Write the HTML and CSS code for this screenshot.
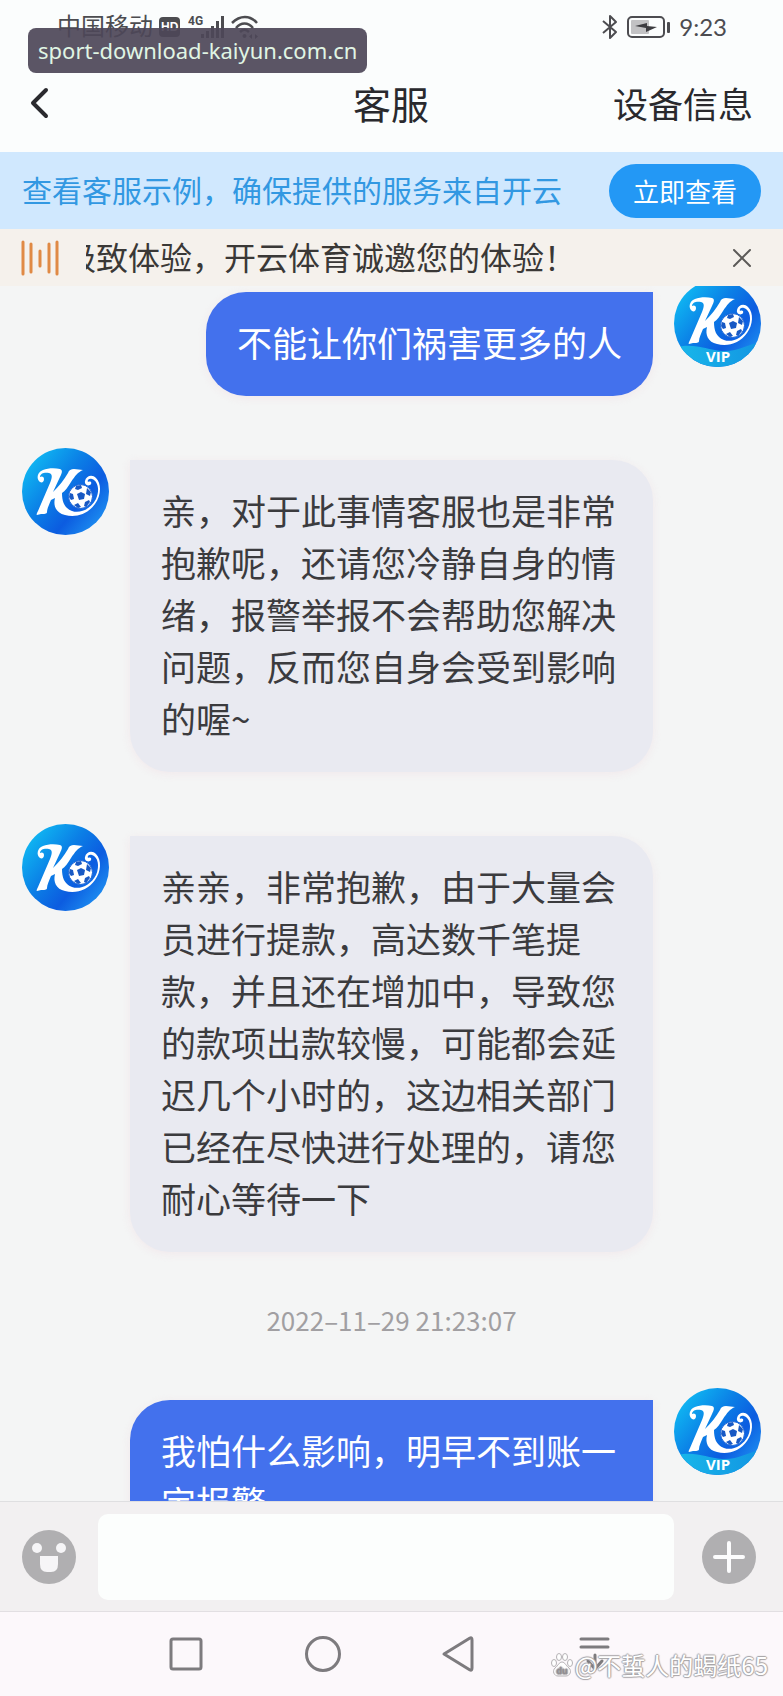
FILE: index.html
```html
<!DOCTYPE html>
<html lang="zh-CN">
<head>
<meta charset="utf-8">
<meta name="viewport" content="width=device-width, initial-scale=1">
<title>客服</title>
<link rel="stylesheet" href="styles.css">
</head>
<body>
<svg class="defs" aria-hidden="true">
  <defs>
    <linearGradient id="disc" x1="0" y1="0.15" x2="0.85" y2="0.85">
      <stop offset="0" stop-color="#10c0f4"/>
      <stop offset="0.45" stop-color="#0b7fe6"/>
      <stop offset="0.75" stop-color="#0c5ce0"/>
      <stop offset="1" stop-color="#1a86ee"/>
    </linearGradient>
    <linearGradient id="wave" x1="0" y1="0" x2="1" y2="0">
      <stop offset="0" stop-color="#19b8ea"/>
      <stop offset="1" stop-color="#1295e2"/>
    </linearGradient>
    <clipPath id="round"><circle cx="43.5" cy="43.5" r="43.5"/></clipPath>
    <symbol id="mark" viewBox="0 0 87 87">
      <path fill="#fff" d="M18 34C14 31 15 24 21 22C26 20 33 20 38 21C41 22 40 25 38 29L31 44C37 38 42 32 46 25C47 22 49 21 52 21L61 22C56 24 53 28 49 34C46 39 43 43 40 45C40 53 42 60 50 63C58 66 69 61 74 51C78 42 76 33 70 31C67 30 65 32 66 34C68 33 70 34 69 36C67 39 62 37 63 33C64 28 70 26 74 30C80 36 79 48 73 56C66 66 54 70 43 67C34 65 31 58 33 50L29 52C27 57 25 61 25 64C25 66 22 66 19 66L15 67C14 67 15 65 16 63L28 35C30 30 31 26 27 25C23 24 18 25 18 29C19 28 22 28 22 31C22 34 20 35 18 34Z"/>
      <circle cx="58.5" cy="48.500" r="12" fill="#fff" stroke="#1461d6" stroke-width="1"/>
      <g fill="#1859c4">
        <path d="M55 46l4-2 4 2-1 5-5 1z"/>
        <path d="M54 38l5-1 1 3-4 2-3-1z"/>
        <path d="M65 40l4 4-1 4-4-2z"/>
        <path d="M48 45l3 1 1 5-3 1-2-3z"/>
        <path d="M52 57l4-2 3 4-3 1z"/>
        <path d="M63 54l4-2 1 2-4 5-2-1z"/>
      </g>
    </symbol>
    <symbol id="logo" viewBox="0 0 87 87">
      <circle cx="43.5" cy="43.5" r="43.5" fill="url(#disc)"/>
      <use href="#mark" width="87" height="87"/>
    </symbol>
    <symbol id="logo-vip" viewBox="0 0 87 87">
      <g clip-path="url(#round)">
        <rect width="87" height="87" fill="url(#disc)"/>
        <path d="M0 68C20 62 32 70 48 71C64 72 74 64 87 62V87H0Z" fill="url(#wave)"/>
      </g>
      <use href="#mark" y="-3" width="87" height="87"/>
      <text x="44" y="82" text-anchor="middle" class="vip">VIP</text>
    </symbol>
  </defs>
</svg>

<div class="screen">
  <div class="status">
    <span class="carrier">中国移动</span>
    <span class="hd">HD</span>
    <svg class="signal" width="38" height="26" viewBox="0 0 38 26" fill="#4c4c50" aria-hidden="true">
      <text x="0" y="11" class="net">4G</text>
      <rect x="13" y="20" width="3" height="4"/><rect x="18" y="17" width="3" height="7"/>
      <rect x="23" y="12" width="3" height="12"/><rect x="28" y="7" width="3" height="17"/><rect x="33" y="2" width="3" height="22"/>
    </svg>
    <svg class="wifi" width="28" height="26" viewBox="0 0 28 26" fill="none" stroke="#4c4c50" stroke-width="2.500" aria-hidden="true">
      <path d="M1 9C9 1 19 1 26 9M5 14C10 8 17 8 22 14M9 18C12 15 15 15 18 18"/>
      <circle cx="13.500" cy="22" r="2" fill="#4c4c50" stroke="none"/>
      <path d="M21 20l-3 2.500 3 2.500zM24 20l3 2.500-3 2.500z" fill="#4c4c50" stroke="none"/>
    </svg>
    <svg class="bluetooth" width="18" height="26" viewBox="0 0 18 26" fill="none" stroke="#4c4c50" stroke-width="2" stroke-linejoin="round" aria-hidden="true">
      <path d="M2 7L15 18L9 24V2L15 8L2 19"/>
    </svg>
    <svg width="44" height="26" viewBox="0 0 44 26" aria-hidden="true">
      <rect x="1" y="3" width="36" height="20" rx="4" fill="none" stroke="#4c4c50" stroke-width="2"/>
      <rect x="4" y="6" width="18" height="14" rx="1" fill="#c2c2c4"/>
      <path d="M8 12L20 9V12L30 13L19 18V14Z" fill="#3c3c40"/>
      <rect x="40" y="8" width="3" height="11" rx="1" fill="#4c4c50"/>
    </svg>
    <span class="clock">9:23</span>
    <span class="site">sport-download-kaiyun.com.cn</span>
  </div>

  <header class="header">
    <button class="plain back" type="button" aria-label="返回">
      <svg width="20" height="32" viewBox="0 0 20 32" fill="none" stroke="#2a2a2e" stroke-width="4" stroke-linecap="round" stroke-linejoin="round"><path d="M17 3L4 16L17 29"/></svg>
    </button>
    <h1 class="title">客服</h1>
    <button class="plain device" type="button">设备信息</button>
  </header>

  <section class="banner">
    <p class="banner-text">查看客服示例，确保提供的服务来自开云</p>
    <button class="pill" type="button">立即查看</button>
  </section>

  <section class="notice">
    <svg width="38" height="36" viewBox="0 0 38 36" stroke="#e08a45" stroke-width="3" stroke-linecap="round" aria-hidden="true">
      <path d="M2 2V34M10 4V32M19 11V26M28 4V32M36 2V34"/>
    </svg>
    <div class="ticker"><p class="ticker-text">极致体验，开云体育诚邀您的体验！</p></div>
    <button class="plain close" type="button" aria-label="关闭">
      <svg width="20" height="20" viewBox="0 0 20 20" stroke="#5c5a58" stroke-width="2" stroke-linecap="round"><path d="M2 2L18 18M18 2L2 18"/></svg>
    </button>
  </section>

  <main class="chat">
    <div class="thread">
      <article class="message mine">
        <p class="bubble">不能让你们祸害更多的人</p>
        <svg class="avatar" role="img" aria-label="VIP"><use href="#logo-vip"/></svg>
      </article>
      <article class="message">
        <svg class="avatar" role="img" aria-label="客服"><use href="#logo"/></svg>
        <p class="bubble">亲，对于此事情客服也是非常抱歉呢，还请您冷静自身的情绪，报警举报不会帮助您解决问题，反而您自身会受到影响的喔~</p>
      </article>
      <article class="message">
        <svg class="avatar" role="img" aria-label="客服"><use href="#logo"/></svg>
        <p class="bubble">亲亲，非常抱歉，由于大量会员进行提款，高达数千笔提款，并且还在增加中，导致您的款项出款较慢，可能都会延迟几个小时的，这边相关部门已经在尽快进行处理的，请您耐心等待一下</p>
      </article>
      <time class="time" datetime="2022-11-29T21:23:07">2022–11–29 21:23:07</time>
      <article class="message mine">
        <p class="bubble">我怕什么影响，明早不到账一定报警</p>
        <svg class="avatar" role="img" aria-label="VIP"><use href="#logo-vip"/></svg>
      </article>
    </div>
  </main>

  <form class="composer">
    <button class="plain" type="button" aria-label="表情">
      <svg width="54" height="54" viewBox="0 0 54 54"><circle cx="27" cy="27" r="27" fill="#b0afb1"/><g fill="#f6f5f7"><circle cx="15" cy="18" r="5"/><circle cx="39" cy="18" r="5"/><path d="M18 26H36V34Q36 42 29 42H25Q18 42 18 34Z"/></g></svg>
    </button>
    <input class="field" type="text" aria-label="消息">
    <button class="plain" type="button" aria-label="更多">
      <svg width="54" height="54" viewBox="0 0 54 54"><circle cx="27" cy="27" r="27" fill="#b0afb1"/><path d="M27 13V41M13 27H41" stroke="#fcfcfd" stroke-width="4" stroke-linecap="round"/></svg>
    </button>
  </form>

  <nav class="system">
    <button class="plain" type="button" aria-label="最近任务"><svg class="key" viewBox="0 0 40 40"><rect x="5" y="5" width="30" height="30" rx="2"/></svg></button>
    <button class="plain" type="button" aria-label="主页"><svg class="key" viewBox="0 0 40 40"><circle cx="20" cy="20" r="16.500"/></svg></button>
    <button class="plain" type="button" aria-label="后退"><svg class="key" viewBox="0 0 40 40"><path d="M4 20L30 4Q32 3 32 6V34Q32 37 30 36Z"/></svg></button>
    <button class="plain" type="button" aria-label="收起"><svg class="key" viewBox="0 0 40 40"><path d="M4 5H31M4 13H31M18 21V35M11 27L18 35L25 27"/></svg></button>
    <span class="credit">
      <svg width="22" height="24" viewBox="0 0 22 24" fill="#fff" stroke="#b4b1b4" stroke-width="1" aria-hidden="true">
        <ellipse cx="3" cy="10" rx="2.500" ry="3.500"/><ellipse cx="8" cy="4" rx="2.500" ry="3.500"/><ellipse cx="14" cy="4" rx="2.500" ry="3.500"/><ellipse cx="19" cy="10" rx="2.500" ry="3.500"/>
        <path d="M11 9C14 9 15 13 18 15C21 18 19 23 15 23H7C3 23 1 18 4 15C7 13 8 9 11 9Z"/>
        <text x="11" y="21" text-anchor="middle" class="du">du</text>
      </svg>
      <span>@不蜇人的蝎纸65</span>
    </span>
  </nav>
</div>
</body>
</html>
```

FILE: styles.css
```css
* {
  box-sizing: border-box;
}

body {
  margin: 0;
  background: #fbfdfd;
  color: #29292d;
  font-family: "Noto Sans CJK SC", "Noto Sans", sans-serif;
}

h1,
p {
  margin: 0;
  font-weight: 400;
}

.defs {
  position: absolute;
  width: 0;
  height: 0;
}

.plain {
  display: flex;
  padding: 0;
  border: 0;
  background: none;
  color: inherit;
  font: inherit;
}

.screen {
  display: flex;
  flex-direction: column;
  height: 100vh;
}

/* Phone status bar */
.status {
  position: relative;
  display: flex;
  align-items: center;
  height: 54px;
  padding: 0 56px 0 57px;
  color: #4c4c50;
  font-size: 24px;
}

.carrier {
  padding-bottom: 4px;
  line-height: 32px;
}

.hd {
  margin: 0 8px 0 6px;
  padding: 0 2px;
  border-radius: 4px;
  background: #4c4c50;
  color: #fff;
  font: 700 12px/20px "Liberation Sans", sans-serif;
}

.net {
  font: 700 12px "Roboto", sans-serif;
}

.wifi {
  margin-left: 5px;
}

.bluetooth {
  margin: 0 8px 0 auto;
}

.clock {
  margin-left: 8px;
  font: 24px/32px "Lato", sans-serif;
}

.site {
  position: absolute;
  top: 28px;
  left: 28px;
  padding: 0 10px;
  border-radius: 8px;
  background: rgba(77, 70, 88, 0.92);
  color: #e0f5e4;
  font: 22px/45px "Noto Sans", sans-serif;
}

/* Title bar */
.header {
  display: grid;
  grid-template-columns: 1fr auto 1fr;
  align-items: center;
  height: 98px;
  padding: 0 30px 0 29px;
}

.title {
  font-size: 38px;
  line-height: 56px;
}

.device {
  justify-self: end;
  font-size: 35px;
  line-height: 52px;
}

.banner {
  display: flex;
  align-items: center;
  justify-content: space-between;
  height: 77px;
  padding: 0 22px;
  background: #d0e8fe;
}

.banner-text {
  padding-bottom: 4px;
  color: #3298e2;
  font-size: 30px;
  line-height: 44px;
  white-space: nowrap;
}

.pill {
  height: 54px;
  padding: 0 24px;
  border: 0;
  border-radius: 27px;
  background: #2398f5;
  color: #fff;
  font: inherit;
  font-size: 26px;
  line-height: 54px;
}

.notice {
  display: flex;
  align-items: center;
  height: 57px;
  padding: 0 31px 0 21px;
  background: #f5f1ec;
}

.ticker {
  flex: 1;
  margin: 0 27px;
  padding-bottom: 4px;
  overflow: hidden;
}

.ticker-text {
  margin-left: -22px;
  color: #3a3836;
  font-size: 32px;
  line-height: 48px;
  white-space: nowrap;
}

/* Conversation */
.chat {
  flex: 1;
  min-height: 0;
  overflow: hidden;
  background: #f4f5f5;
}

.thread {
  display: flex;
  flex-direction: column;
  gap: 52px;
  margin-top: -6px;
  padding: 0 22px;
}

.message {
  display: grid;
  grid-template-columns: 87px 1fr 87px;
  column-gap: 21px;
  align-items: start;
}

.avatar {
  width: 87px;
  height: 87px;
}

.bubble {
  margin-top: 12px;
  padding: 24px 31px 28px;
  border-radius: 0 40px 40px 40px;
  background: #e9eaf1;
  box-shadow: 0 2px 8px rgba(240, 225, 230, 0.6);
  color: #3b3b3e;
  font-size: 35px;
  line-height: 52px;
}

.mine .bubble {
  grid-column: 2;
  justify-self: end;
  border-radius: 40px 0 40px 40px;
  background: #4371ed;
  color: #fff;
}

.vip {
  fill: #fff;
  font: 700 15px "Open Sans", sans-serif;
}

.time {
  color: #a19fa2;
  font-size: 26px;
  line-height: 32px;
  text-align: center;
}

/* Message entry */
.composer {
  display: flex;
  align-items: center;
  gap: 22px;
  height: 110px;
  padding: 0 27px 0 22px;
  border-top: 1px solid #dfdfe1;
  background: #f2f0f1;
}

.field {
  flex: 1;
  min-width: 0;
  height: 86px;
  margin-right: 6px;
  padding: 0 24px;
  border: 0;
  border-radius: 10px;
  background: #fcfefd;
  font: inherit;
  font-size: 35px;
}

/* System navigation keys */
.system {
  position: relative;
  display: grid;
  grid-template-columns: repeat(4, 1fr);
  place-items: center;
  height: 85px;
  padding: 0 15%;
  border-top: 1px solid #e2dfe2;
  background: #fcf8fb;
}

.key {
  width: 40px;
  height: 40px;
  fill: none;
  stroke: #7d7b7e;
  stroke-width: 3px;
  stroke-linecap: round;
  stroke-linejoin: round;
}

.credit {
  position: absolute;
  right: 15px;
  bottom: 14px;
  display: flex;
  align-items: center;
  gap: 2px;
  color: #fff;
  font-size: 24px;
  line-height: 34px;
  white-space: nowrap;
  text-shadow: 1px 0 1px #a5a2a5, -1px 0 1px #a5a2a5, 0 1px 1px #a5a2a5, 0 -1px 1px #a5a2a5;
}

.du {
  fill: #8f8c8f;
  stroke: none;
  font: 700 9px "Liberation Sans", sans-serif;
}
```
